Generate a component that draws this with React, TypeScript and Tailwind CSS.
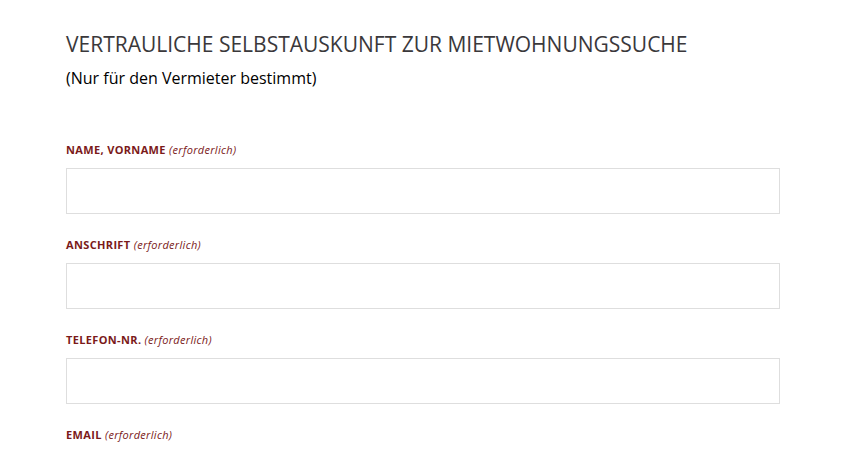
import React from "react";

const fields = ["NAME, VORNAME", "ANSCHRIFT", "TELEFON-NR.", "EMAIL"];

export default function App() {
  return (
    <div className="min-h-[473px] bg-white font-['Open_Sans',sans-serif]">
      <div className="w-[714px] pl-[66px] pt-[30px] box-content">
        <h1 className="text-[21px] leading-[28px] text-[#3a383b]">
          VERTRAULICHE SELBSTAUSKUNFT ZUR MIETWOHNUNGSSUCHE
        </h1>
        <p className="mt-[8px] text-[16px] leading-[24px] text-black">
          (Nur für den Vermieter bestimmt)
        </p>

        <div className="mt-[53px] flex flex-col gap-[24px]">
          {fields.map((f, i) => (
            <div key={f} className="flex flex-col">
              <label className="text-[11px] leading-[14px] font-bold text-[#7b1a1a] tracking-[0.35px]">
                {f}{" "}
                <span className="italic font-normal tracking-[0.3px]">(erforderlich)</span>
              </label>
              {i < 3 && (
                <input className="mt-[11px] h-[46px] w-full border border-[#dedede] bg-white outline-none" />
              )}
            </div>
          ))}
        </div>
      </div>
    </div>
  );
}
